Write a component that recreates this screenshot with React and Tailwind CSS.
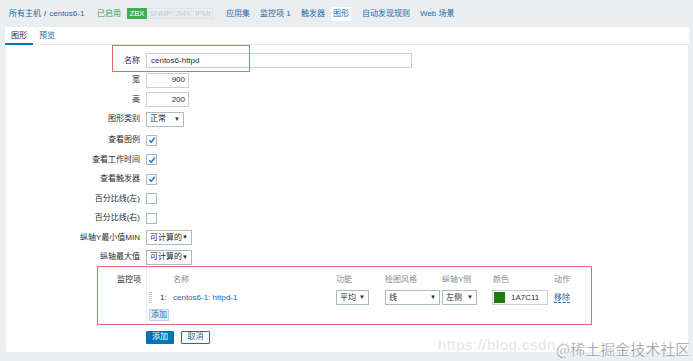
import React from "react";

const font = { fontFamily: '"Liberation Sans", Arial, "Noto Sans CJK SC", sans-serif' };

const Check = ({ on }) => (
  <span className="inline-flex items-center justify-center w-[11px] h-[11px] border border-[#acbbc2] bg-white">
    {on && (
      <svg width="8" height="8" viewBox="0 0 8 8">
        <path d="M1.2 4.2 L3.2 6.2 L6.8 1.8" fill="none" stroke="#0275b8" strokeWidth="1.4" />
      </svg>
    )}
  </span>
);

const Select = ({ label, w }) => (
  <span className={`inline-flex items-center justify-between whitespace-nowrap h-[15px] border border-[#acbbc2] bg-white pl-[3px] pr-[3px] text-[#1f2c33] ${w}`}>
    <span>{label}</span>
    <span className="text-[6px]">▼</span>
  </span>
);

const Row = ({ label, children }) => (
  <div className="grid grid-cols-[134px_1fr] gap-x-[6px] h-[19.5px] items-center">
    <div className="text-right text-[#1f2c33] whitespace-nowrap">{label}</div>
    <div className="flex items-center">{children}</div>
  </div>
);

export default function App() {
  const nav = [
    ["应用集", "w-[34px]"],
    ["监控项 1", "w-[41px]"],
    ["触发器", "w-[32px]"],
    ["图形", "w-[29px]"],
    ["自动发现规则", "w-[58px]"],
    ["Web 场景", "w-[36px]"],
  ];
  return (
    <div className="relative w-[693px] h-[361px] bg-[#ebeef0] text-[8px] overflow-hidden" style={font}>
      <div className="flex items-center h-[27px] pl-[9px] whitespace-nowrap">
        <span className="w-[88px] flex">
          <span className="text-[#2467a8]">所有主机</span>
          <span className="mx-[3px] text-[#1f2c33]">/</span>
          <span className="text-[#2467a8]">centos6-1</span>
        </span>
        <span className="w-[30px] text-[#429e47]">已启用</span>
        <span className="flex h-[11px] items-stretch gap-[1px] text-center text-[7.5px]">
          <span className="w-[20px] bg-[#3daf57] text-white flex items-center justify-center">ZBX</span>
          <span className="w-[25px] border border-[#dfe4e7] text-[#c3cbcf] flex items-center justify-center">SNMP</span>
          <span className="w-[18px] border border-[#dfe4e7] text-[#c3cbcf] flex items-center justify-center">JMX</span>
          <span className="w-[20px] border border-[#dfe4e7] text-[#c3cbcf] flex items-center justify-center">IPMI</span>
        </span>
        <span className="ml-[13px] flex items-center">
          {nav.map(([n, w]) => (
            <span key={n} className={`${w} flex`}>
              <span
                className={`text-[#2467a8] h-[14px] flex items-center ${n === "图形" ? "bg-white px-[2px] -ml-[2px]" : ""}`}
              >
                {n}
              </span>
            </span>
          ))}
        </span>
      </div>

      <div className="ml-[5px] mr-[4px] bg-white flex h-[18px] items-end border-b border-[#e4e8eb]">
        <div className="w-[28px] h-full flex items-center justify-center text-[#1f2c33] border-b-2 border-[#0275b8] -mb-px">
          图形
        </div>
        <div className="ml-[6px] h-full flex items-center text-[#2467a8]">预览</div>
      </div>

      <div className="relative ml-[6px] mr-[5px] bg-white h-[307px] rounded-b-[3px] pt-[6px]">
        <div className="absolute left-[106px] top-0 w-[138px] h-[27px] border border-[#e06a6a]" />

        <Row label="名称">
          <span className="w-[266px] h-[15px] border border-[#c8d0d4] px-[4px] flex items-center text-[#1f2c33]">
            centos6-httpd
          </span>
        </Row>
        <Row label="宽">
          <span className="w-[43px] h-[15px] border border-[#c8d0d4] px-[3px] flex items-center justify-end text-[#1f2c33]">900</span>
        </Row>
        <Row label="高">
          <span className="w-[43px] h-[15px] border border-[#c8d0d4] px-[3px] flex items-center justify-end text-[#1f2c33]">200</span>
        </Row>
        <Row label="图形类别">
          <Select label="正常" w="w-[38px]" />
        </Row>
        <div className="h-[1.5px]" />
        <Row label="查看图例"><Check on /></Row>
        <Row label="查看工作时间"><Check on /></Row>
        <Row label="查看触发器"><Check on /></Row>
        <Row label="百分比线(左)"><Check /></Row>
        <Row label="百分比线(右)"><Check /></Row>
        <Row label="纵轴Y最小值MIN">
          <Select label="可计算的" w="w-[46px]" />
        </Row>
        <Row label="纵轴最大值">
          <Select label="可计算的" w="w-[46px]" />
        </Row>

        <div className="ml-[91px] -mt-[1.5px] w-[495px] h-[59px] border border-[#e06a6a] flex">
          <div className="w-[43px] text-right pt-[7px] text-[#1f2c33]">监控项</div>
          <div className="ml-[5px] w-[440px] border-x border-[#e8ecee] pl-[2px] pt-[7px]">
            <div className="grid grid-cols-[24px_163px_49px_57px_51px_61px_1fr] text-[#7f8d94]">
              <span />
              <span>名称</span>
              <span>功能</span>
              <span>绘图风格</span>
              <span>纵轴Y侧</span>
              <span>颜色</span>
              <span>动作</span>
            </div>
            <div className="grid grid-cols-[24px_163px_49px_57px_51px_61px_1fr] items-center mt-[4px] h-[16px]">
              <span className="flex items-center gap-[8px]">
                <span className="w-[3px] h-[11px] bg-[repeating-linear-gradient(#c5ccd0_0_1px,transparent_1px_2px)]" />
                <span className="text-[#1f2c33]">1:</span>
              </span>
              <span className="text-[#2467a8]">centos6-1: httpd-1</span>
              <span><Select label="平均" w="w-[33px]" /></span>
              <span><Select label="线" w="w-[55px]" /></span>
              <span><Select label="左侧" w="w-[35px]" /></span>
              <span className="flex items-center w-[56px] h-[15px] border border-[#c8d0d4] -ml-[1px]">
                <span className="w-[11px] h-[11px] bg-[#1a7c11] ml-[1px]" />
                <span className="ml-[6px] text-[#1f2c33]">1A7C11</span>
              </span>
              <span className="text-[#2467a8] border-b border-dashed border-[#2467a8] w-fit leading-[9px]">移除</span>
            </div>
            <div className="mt-[3px]">
              <span className="inline-flex items-center h-[12px] px-[1px] bg-[#e6f0f8] border border-[#b8d3ea] text-[#2467a8]">添加</span>
            </div>
          </div>
        </div>

        <div className="ml-[140px] mt-[6px] flex gap-[7px]">
          <span className="w-[28px] h-[13px] bg-[#0275b8] text-white flex items-center justify-center rounded-[1px]">添加</span>
          <span className="w-[29px] h-[13px] border border-[#0275b8] text-[#2467a8] flex items-center justify-center rounded-[1px]">取消</span>
        </div>
      </div>

      <div className="absolute left-[438px] top-[334px] text-[15px] text-[#e2e6e9] tracking-[0.5px]" style={font}>
        https://blog.csdn.n
      </div>
      <div
        className="absolute left-[556px] top-[338px] text-[15px] text-[#8a8a8a]"
        style={{ fontFamily: '"Noto Sans CJK SC", sans-serif', WebkitTextStroke: "0.3px #fff", textShadow: "0 0 2px #fff" }}
      >
        @稀土掘金技术社区
      </div>
    </div>
  );
}
